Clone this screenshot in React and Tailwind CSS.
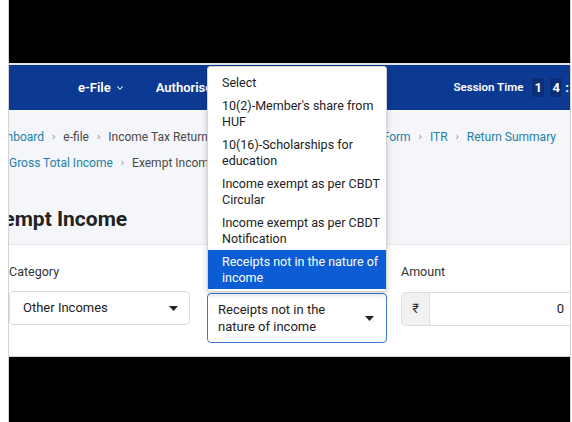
import { ChevronDown } from 'lucide-react';

const options = [
  'Select',
  "10(2)-Member's share from HUF",
  '10(16)-Scholarships for education',
  'Income exempt as per CBDT Circular',
  'Income exempt as per CBDT Notification',
  'Receipts not in the nature of income',
];

function Caret() {
  return (
    <svg width="9" height="5" viewBox="0 0 9 5" className="shrink-0">
      <path d="M0 0h9L4.5 5z" fill="#222" />
    </svg>
  );
}

function Sep() {
  return <span className="mx-[8px] text-[#8a8f96] text-[11px]">›</span>;
}

export default function App() {
  const selected = options.length - 1;

  return (
    <div className="w-[572px] h-[422px] bg-white font-['Roboto',sans-serif]">
      <div className="relative ml-[8px] w-[563px] h-[422px] border-x border-[#d2d2d2] flex flex-col overflow-hidden">
        <div className="h-[63px] bg-black shrink-0" />
        <div className="h-[2px] bg-[#e2e5eb] shrink-0" />

        {/* top nav */}
        <nav className="h-[45px] shrink-0 bg-[#0c3a93] text-white flex items-center pl-[69px]">
          <span className="flex items-center gap-[4px] text-[13px] font-semibold">
            e-File <ChevronDown size={10} strokeWidth={2.5} />
          </span>
          <span className="ml-[31px] text-[13px] font-semibold whitespace-nowrap">Authorised Partners</span>
          <div className="ml-auto flex items-center whitespace-nowrap mr-[-14px]">
            <span className="text-[11.5px] font-semibold mr-[9px]">Session Time</span>
            <span className="w-[12px] h-[19px] bg-[#0a2f78] flex items-center justify-center text-[13px] font-bold">1</span>
            <span className="ml-[6px] w-[12px] h-[19px] bg-[#0a2f78] flex items-center justify-center text-[13px] font-bold">4</span>
            <span className="ml-[3px] text-[13px] font-bold">:</span>
            <span className="ml-[3px] w-[12px] h-[19px] bg-[#0a2f78] flex items-center justify-center text-[13px] font-bold">5</span>
          </div>
        </nav>

        {/* breadcrumbs + heading */}
        <section className="h-[135px] shrink-0 bg-[#f4f6f9] border-b border-[#e7e9ed] pt-[14px]">
          <div className="flex justify-between items-center text-[12px] leading-[26px] whitespace-nowrap pr-[14px]">
            <div className="flex items-center ml-[-23px]">
              <span className="text-[#1f7fa8]">Dashboard</span>
              <Sep />
              <span className="text-[#4a4a4a]">e-file</span>
              <Sep />
              <span className="text-[#4a4a4a]">Income Tax Returns</span>
            </div>
            <div className="flex items-center ml-[-4px]">
              <span className="text-[#1f7fa8]">Income Tax Return Form</span>
              <Sep />
              <span className="text-[#1f7fa8]">ITR</span>
              <Sep />
              <span className="text-[#1f7fa8]">Return Summary</span>
            </div>
          </div>
          <div className="flex items-center text-[12px] leading-[26px] whitespace-nowrap">
            <span className="text-[#1f7fa8]">Gross Total Income</span>
            <Sep />
            <span className="text-[#4a4a4a]">Exempt Income</span>
          </div>
          <h1 className="mt-[29px] ml-[-28px] text-[21px] leading-[28px] font-bold text-[#222] whitespace-nowrap">
            Exempt Income
          </h1>
        </section>

        {/* form row */}
        <section className="flex-1 bg-white pt-[17px] flex items-start">
          <div className="w-[181px] shrink-0">
            <div className="text-[12.5px] leading-[20px] text-[#333]">Category</div>
            <div className="mt-[9px] h-[34px] border border-[#dcdcdc] rounded-[4px] bg-white flex items-center justify-between pl-[13px] pr-[11px]">
              <span className="text-[13px] text-[#222]">Other Incomes</span>
              <Caret />
            </div>
          </div>
          <div className="w-[180px] ml-[17px] shrink-0 pt-[31px]">
            <div className="h-[50px] border-[1.5px] border-[#3b78d4] rounded-[4px] bg-white flex items-center justify-between pl-[10px] pr-[12px]">
              <span className="text-[13px] leading-[17px] text-[#222]">
                Receipts not in the
                <br />
                nature of income
              </span>
              <Caret />
            </div>
          </div>
          <div className="w-[190px] ml-[14px] shrink-0">
            <div className="text-[12.5px] leading-[20px] text-[#333]">Amount</div>
            <div className="mt-[10px] h-[34px] flex border border-[#dcdcdc] rounded-[4px] overflow-hidden">
              <span className="w-[28px] bg-[#f1f1f1] border-r border-[#dcdcdc] flex items-center justify-center text-[13px] text-[#333]">₹</span>
              <span className="flex-1 bg-white flex items-center justify-end pr-[26px] text-[13px] text-[#222]">0</span>
            </div>
          </div>
        </section>

        <div className="h-[1px] bg-[#d8d8d8] shrink-0" />
        <div className="h-[65px] bg-black shrink-0" />

        {/* open listbox for the second select */}
        <ul className="absolute left-[198px] top-[66px] w-[180px] bg-white border border-[#d4d4d4] rounded-[3px] shadow-[0_2px_6px_rgba(0,0,0,0.18)] pt-[4px] pb-[2px] text-[12.5px] leading-[16px]">
          {options.map((o, i) => (
            <li
              key={o}
              className={
                i === selected
                  ? 'pl-[14px] pr-[6px] py-[3.5px] bg-[#0b5cd5] text-white'
                  : 'pl-[14px] pr-[6px] py-[3.5px] text-[#222]'
              }
            >
              {o}
            </li>
          ))}
        </ul>
      </div>
    </div>
  );
}
